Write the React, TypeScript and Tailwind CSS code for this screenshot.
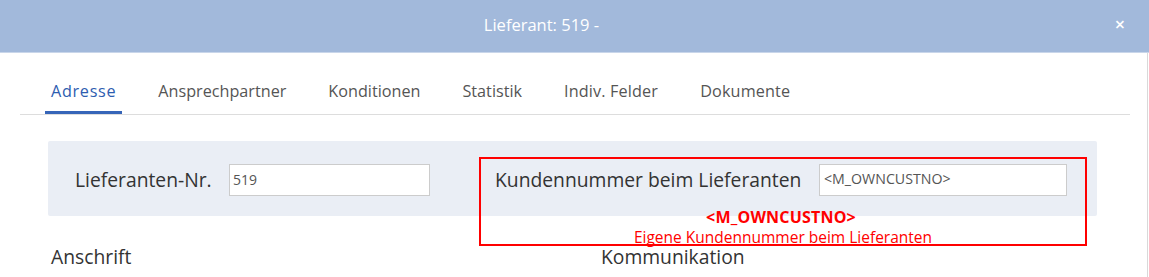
import React from "react";

const tabs = ["Adresse", "Ansprechpartner", "Konditionen", "Statistik", "Indiv. Felder", "Dokumente"];

export default function App() {
  return (
    <div
      className="w-[1149px] h-[277px] overflow-hidden bg-white text-[#333]"
      style={{ fontFamily: '"Open Sans", "Noto Sans", sans-serif' }}
    >
      <div className="h-[53px] bg-[#a2b9db] border-b border-[#c9d6ea] flex items-center relative">
        <div className="flex-1 text-center text-white text-[16.5px] pr-[66px] pb-[2px]">Lieferant: 519 -</div>
        <div className="absolute right-[24px] top-[15px] text-white text-[18px] leading-none font-semibold">×</div>
      </div>
      <div className="h-[224px] border-r border-[#d9d9d9] mr-[1px]">
        <div className="mx-[20px] w-[1110px] border-b border-[#dddddd] flex gap-[30px] pl-[25px] pt-[20px]">
          {tabs.map((t, i) => (
            <div
              key={t}
              className={
                "px-[6px] h-[41px] pt-[6px] text-[16.2px] border-b-[3px] " +
                (i === 0
                  ? "text-[#2e5db0] border-[#3665b8] tracking-[0.7px]"
                  : "text-[#555] border-transparent") +
                (i >= 4 ? " tracking-[0.15px]" : "")
              }
            >
              {t}
            </div>
          ))}
        </div>
        <div className="relative mx-[48px] mt-[26px] w-[1049px] h-[75px] bg-[#eaeef5] rounded-[2px] flex items-center">
          <div className="pl-[27px] w-[181px] text-[19.3px] text-[#333] pt-[3px]">Lieferanten-Nr.</div>
          <div className="w-[201px] h-[32px] mt-[3px] border border-[#cccccc] bg-white flex items-center pl-[3px] pb-[2px] text-[14px] text-[#555]">519</div>
          <div className="pl-[65px] w-[389px] text-[19.3px] text-[#333] pt-[3px] whitespace-nowrap">Kundennummer beim Lieferanten</div>
          <div className="w-[248px] h-[32px] mt-[3px] border border-[#cccccc] bg-white flex items-center pl-[4px] pb-[2px] text-[14.2px] text-[#555]">&lt;M_OWNCUSTNO&gt;</div>
          <div className="absolute left-[431px] top-[16px] w-[608px] h-[89px] border-2 border-[#ff0000] flex flex-col items-center pt-[49px] text-[#ff0000] leading-[18px]">
            <div className="text-[16px] font-bold tracking-[0.2px] pr-[4px]">&lt;M_OWNCUSTNO&gt;</div>
            <div className="text-[15.5px] mt-[2px]">Eigene Kundennummer beim Lieferanten</div>
          </div>
        </div>
        <div className="flex mt-[29px] text-[19.3px] text-[#333] leading-[24px]">
          <div className="pl-[51px] w-[601px]">Anschrift</div>
          <div>Kommunikation</div>
        </div>
      </div>
    </div>
  );
}
